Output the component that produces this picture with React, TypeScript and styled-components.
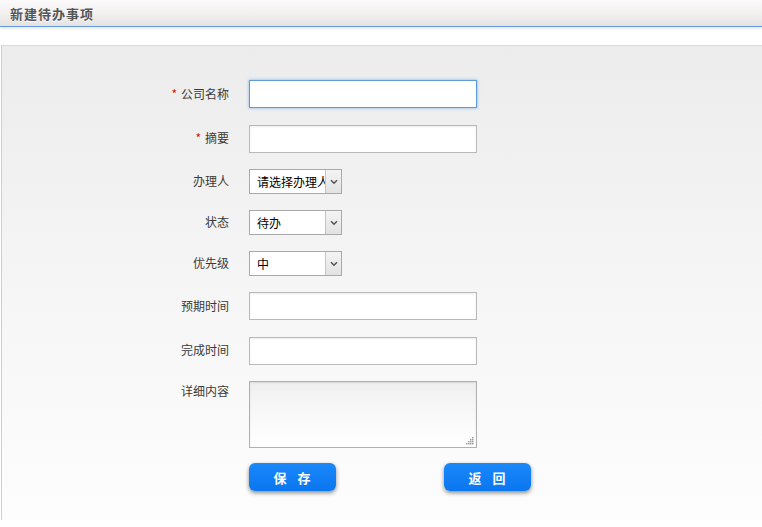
import { PropsWithChildren, SelectHTMLAttributes } from 'react';
import styled, { createGlobalStyle, css } from 'styled-components';

const GlobalStyle = createGlobalStyle`
    html, body {
        margin: 0;
        padding: 0;
        background: #fff;
    }
    body {
        font-family: 'Liberation Sans', 'Noto Sans CJK SC', sans-serif;
        font-size: 12px;
        color: #333;
    }
`;

const Page = styled.div`
    width: 762px;
    height: 527px;
    overflow: hidden;
    background: #fff;
`;

const Header = styled.div`
    height: 26px;
    display: flex;
    align-items: center;
    padding-left: 10px;
    background: linear-gradient(to bottom, #fcfafa 0%, #f2efef 55%, #e4e3e2 100%);
    border-bottom: 1px solid #6398dc;
    box-shadow: 0 2px 2px rgba(0, 0, 0, 0.08);
`;

const Title = styled.h1`
    margin: 0;
    font-family: 'Noto Sans CJK SC', sans-serif;
    font-size: 13px;
    font-weight: 700;
    color: #555;
    letter-spacing: 1px;
    text-shadow: 0 1px 0 #fff;
`;

const Panel = styled.div`
    margin: 18px 0 0 1px;
    height: 475px;
    border-top: 1px solid #dadada;
    border-left: 1px solid #cfcfcf;
    background: linear-gradient(to bottom, #ececec 0%, #f6f6f6 55%, #fdfdfd 100%);
    padding-top: 34px;
    box-sizing: border-box;
`;

const Form = styled.form`
    display: grid;
    grid-template-columns: 227px 300px;
    grid-template-rows: 29px 28px 25px 25px 25px 29px 28px 66px 28px;
    column-gap: 20px;
    row-gap: 16px;
    align-items: start;
`;

const Label = styled.label<{ $top?: boolean }>`
    justify-self: end;
    align-self: center;
    margin-bottom: 2px;
    font-family: 'Noto Sans CJK SC', sans-serif;
    font-size: 12px;
    line-height: 18px;
    color: #3a3a3a;
    ${({ $top }) =>
        $top &&
        css`
            align-self: start;
            padding-top: 1px;
        `}
`;

const Star = styled.span`
    color: #d8141b;
    margin-right: 4px;
    font-size: 12px;
`;

const TextInput = styled.input<{ $active?: boolean }>`
    width: 228px;
    height: 28px;
    box-sizing: border-box;
    margin: 0;
    padding: 0 4px;
    border: 1px solid #b9b9b9;
    background: #fff;
    box-shadow: inset 0 1px 2px rgba(0, 0, 0, 0.08);
    font-family: 'Noto Sans CJK SC', sans-serif;
    font-size: 12px;
    outline: none;
    caret-color: #000;
    ${({ $active }) =>
        $active &&
        css`
            border-color: #5d9bd9;
            box-shadow: 0 0 3px rgba(80, 150, 230, 0.7);
        `}
`;

const AreaWrap = styled.div`
    position: relative;
    width: 228px;
    height: 67px;
`;

const TextArea = styled.textarea`
    display: block;
    width: 228px;
    height: 67px;
    box-sizing: border-box;
    margin: 0;
    padding: 4px;
    border: 1px solid #b0b0b0;
    background: linear-gradient(to bottom, #efefef 0%, #f8f8f8 45%, #fff 100%);
    box-shadow: inset 0 1px 2px rgba(0, 0, 0, 0.1);
    font-family: 'Noto Sans CJK SC', sans-serif;
    font-size: 12px;
    outline: none;
    resize: none;
`;

const Grip = styled.svg`
    position: absolute;
    right: 3px;
    bottom: 3px;
    pointer-events: none;
`;

const SelectBox = styled.div`
    width: 93px;
    height: 25px;
    box-sizing: border-box;
    border: 1px solid #a9a9a9;
    background: #fff;
    display: flex;
    overflow: hidden;
`;

const NativeSelect = styled.select`
    flex: 1;
    min-width: 0;
    height: 23px;
    appearance: none;
    border: none;
    background: transparent;
    margin: 0;
    padding: 0 0 0 7px;
    font-family: 'Noto Sans CJK SC', sans-serif;
    font-size: 12px;
    color: #000;
    outline: none;
`;

const ArrowBox = styled.span`
    width: 16px;
    flex-shrink: 0;
    box-sizing: border-box;
    border-left: 1px solid #c4c4c4;
    background: linear-gradient(to bottom, #f4f4f4, #e2e2e2);
    display: flex;
    align-items: center;
    justify-content: center;
`;

const Buttons = styled.div`
    grid-column: 2;
    display: flex;
    gap: 108px;
`;

const Button = styled.button`
    flex-shrink: 0;
    width: 87px;
    height: 28px;
    border: none;
    border-radius: 6px;
    background: linear-gradient(to bottom, #1a88fb, #0a76ef);
    box-shadow: 0 2px 4px rgba(0, 0, 0, 0.45);
    color: #fff;
    font-family: 'Noto Sans CJK SC', sans-serif;
    font-size: 13px;
    font-weight: 700;
    letter-spacing: 1px;
    word-spacing: 6px;
    cursor: pointer;
    padding: 0;
`;

const Select = ({ children, ...rest }: PropsWithChildren<SelectHTMLAttributes<HTMLSelectElement>>) => (
    <SelectBox>
        <NativeSelect {...rest}>{children}</NativeSelect>
        <ArrowBox>
            <svg width="8" height="6" viewBox="0 0 8 6">
                <path d="M1 1.2 L4 4.2 L7 1.2" fill="none" stroke="#555" strokeWidth="1.6" />
            </svg>
        </ArrowBox>
    </SelectBox>
);

// dotted resize grip, as the old browser drew it
const gripDots = [
    [6, 0],
    [6, 2],
    [4, 2],
    [6, 4],
    [4, 4],
    [2, 4],
    [6, 6],
    [4, 6],
    [2, 6],
    [0, 6],
];

export default function App() {
    return (
        <Page>
            <GlobalStyle />
            <Header>
                <Title>新建待办事项</Title>
            </Header>
            <Panel>
                <Form onSubmit={(e) => e.preventDefault()}>
                    <Label>
                        <Star>*</Star>公司名称
                    </Label>
                    <TextInput $active autoFocus />

                    <Label>
                        <Star>*</Star>摘要
                    </Label>
                    <TextInput />

                    <Label>办理人</Label>
                    <Select defaultValue="">
                        <option value="">请选择办理人</option>
                    </Select>

                    <Label>状态</Label>
                    <Select defaultValue="todo">
                        <option value="todo">待办</option>
                        <option value="done">已办</option>
                    </Select>

                    <Label>优先级</Label>
                    <Select defaultValue="mid">
                        <option value="high">高</option>
                        <option value="mid">中</option>
                        <option value="low">低</option>
                    </Select>

                    <Label>预期时间</Label>
                    <TextInput />

                    <Label>完成时间</Label>
                    <TextInput />

                    <Label $top>详细内容</Label>
                    <AreaWrap>
                        <TextArea />
                        <Grip width="8" height="8" viewBox="0 0 8 8">
                            {gripDots.map(([x, y]) => (
                                <rect key={`${x}-${y}`} x={x} y={y} width="1.5" height="1.5" fill="#a0a0a0" />
                            ))}
                        </Grip>
                    </AreaWrap>

                    <Buttons>
                        <Button type="submit">保 存</Button>
                        <Button type="button">返 回</Button>
                    </Buttons>
                </Form>
            </Panel>
        </Page>
    );
}
